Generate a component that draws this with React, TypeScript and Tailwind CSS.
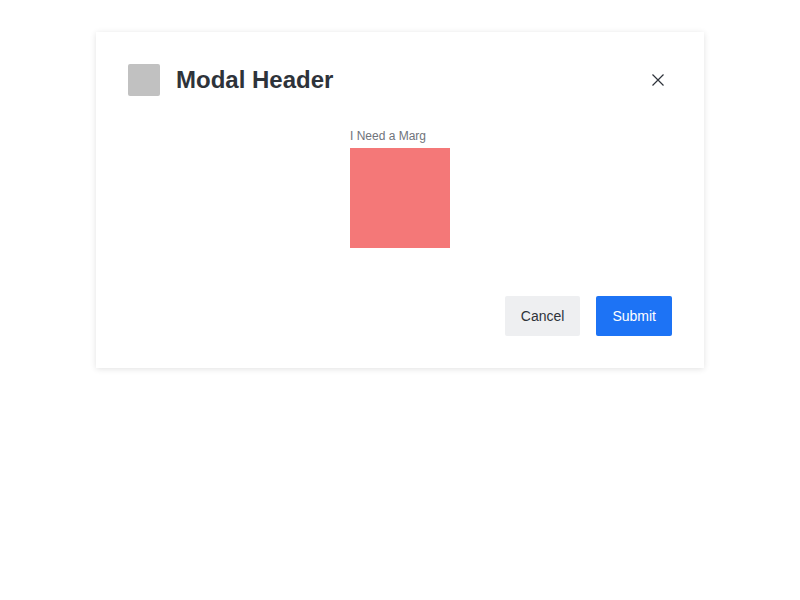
import React from 'react';

export default function App() {
  return (
    <div className="min-h-[600px] w-[800px] bg-white pt-8 font-['Liberation_Sans',Arial,sans-serif]">
      <div className="mx-auto w-[608px] bg-white p-8 shadow-[0_1px_6px_rgba(0,0,0,0.12)]">
        {/* Header */}
        <div className="flex h-8 items-center">
          <div className="h-8 w-8 rounded-[2px] bg-[#c1c1c1]" />
          <h2 className="ml-4 flex-1 text-[24px] font-bold leading-8 text-[#2e333a]">Modal Header</h2>
          <button className="mr-2 flex h-3 w-3 items-center justify-center text-[#2e333a]">
            <svg width="12" height="12" viewBox="0 0 12 12" fill="none" stroke="currentColor" strokeWidth="1.2">
              <path d="M0.5 0.5l11 11M11.5 0.5L0.5 11.5" />
            </svg>
          </button>
        </div>

        {/* Body */}
        <div className="mt-8 flex justify-center">
          <div className="w-[100px]">
            <div className="h-[20px] overflow-hidden">
              <p className="whitespace-nowrap text-[12px] leading-[16px] text-[#70747b]">I Need a Marg</p>
            </div>
            <div className="h-[100px] w-[100px] bg-[#f47878]" />
          </div>
        </div>

        {/* Footer */}
        <div className="mt-12 flex justify-end gap-4">
          <button className="h-10 rounded-[2px] bg-[#eeeff1] px-4 text-[14px] text-[#2e333a]">Cancel</button>
          <button className="h-10 rounded-[2px] bg-[#1d73f5] px-4 text-[14px] text-white">Submit</button>
        </div>
      </div>
    </div>
  );
}
